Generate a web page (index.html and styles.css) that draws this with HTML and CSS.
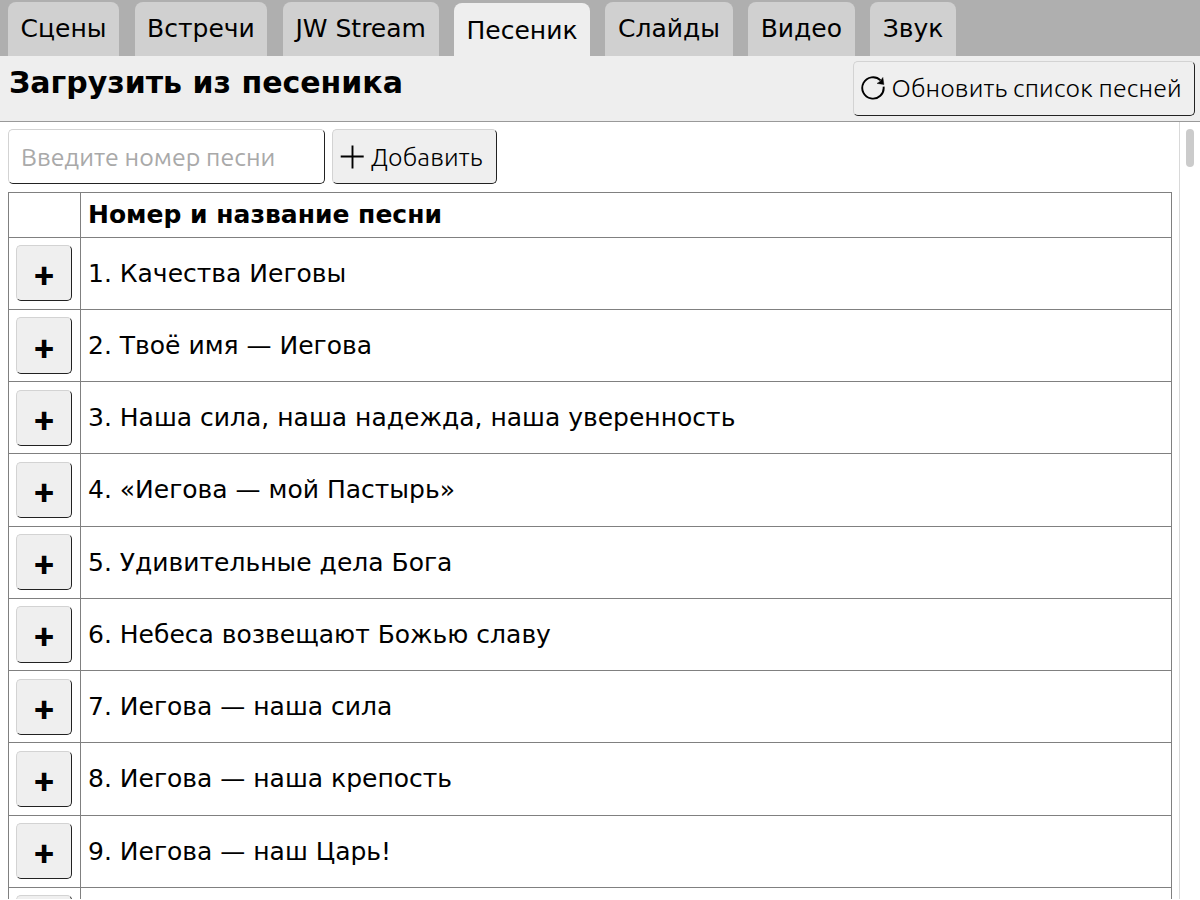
FILE: index.html
```
<!DOCTYPE html>
<html lang="ru">
<head>
<meta charset="utf-8">
<title>Песеник</title>
<link rel="stylesheet" href="styles.css">
</head>
<body>
<nav class="tabs">
<a class="tab">Сцены</a>
<a class="tab">Встречи</a>
<a class="tab">JW Stream</a>
<a class="tab active">Песеник</a>
<a class="tab">Слайды</a>
<a class="tab">Видео</a>
<a class="tab">Звук</a>
</nav>
<header class="head">
<h1 class="title">Загрузить из песеника</h1>
<button class="btn refresh"><svg class="icon" viewBox="0 0 24 24"><path d="M22.6 10.6A10.7 10.7 0 1 1 19.6 4.4" fill="none" stroke="#000" stroke-width="1.9"/><path d="M21.9 1.4l1 7.2-6.9-1.2 3-2z" stroke="#000" stroke-width=".4"/></svg><span>Обновить список песней</span></button>
</header>
<main class="main">
<div class="form">
<input class="field" placeholder="Введите номер песни">
<button class="btn insert"><svg class="icon" viewBox="0 0 24 24"><path d="M12.5 .5v23M.7 11.5h23" fill="none" stroke="#000" stroke-width="1.9"/></svg><span>Добавить</span></button>
</div>
<div class="table">
<div class="row th"><div class="c1"></div><div class="c2">Номер и название песни</div></div>
<div class="row"><div class="c1"><button class="add">+</button></div><div class="c2">1. Качества Иеговы</div></div>
<div class="row"><div class="c1"><button class="add">+</button></div><div class="c2">2. Твоё имя — Иегова</div></div>
<div class="row"><div class="c1"><button class="add">+</button></div><div class="c2">3. Наша сила, наша надежда, наша уверенность</div></div>
<div class="row"><div class="c1"><button class="add">+</button></div><div class="c2">4. «Иегова — мой Пастырь»</div></div>
<div class="row"><div class="c1"><button class="add">+</button></div><div class="c2">5. Удивительные дела Бога</div></div>
<div class="row"><div class="c1"><button class="add">+</button></div><div class="c2">6. Небеса возвещают Божью славу</div></div>
<div class="row"><div class="c1"><button class="add">+</button></div><div class="c2">7. Иегова — наша сила</div></div>
<div class="row"><div class="c1"><button class="add">+</button></div><div class="c2">8. Иегова — наша крепость</div></div>
<div class="row"><div class="c1"><button class="add">+</button></div><div class="c2">9. Иегова — наш Царь!</div></div>
<div class="row"><div class="c1"><button class="add"></button></div><div class="c2"></div></div>
</div>
<div class="track"><div class="thumb"></div></div>
</main>
</body>
</html>
```
FILE: styles.css
```
* { box-sizing: border-box; }
body { margin: 0; height: 899px; overflow: hidden; display: flex; flex-direction: column; background: #fff; color: #000; font: 25px/30px "DejaVu Sans", sans-serif; }
.tabs { display: flex; align-items: flex-end; gap: 15.4px; height: 56px; flex: none; padding: 0 8px; background: #afafaf; }
.tab { height: 54px; padding: 12px 12.6px 0; border-radius: 8px 8px 0 0; background: #d0d0d0; white-space: nowrap; }
.tab.active { height: 53px; padding-top: 13px; background: #eee; }
.head { height: 66px; flex: none; display: flex; justify-content: space-between; padding: 5px 5px 0 9px; background: #eee; border-bottom: 1px solid #999; }
.title { margin: 4px 0 0; font-size: 30px; line-height: 36px; }
.btn { height: 55px; display: flex; align-items: center; gap: 7px; padding: 0 0 0 7px; border: 1px solid; border-color: #d3d3d3 #222 #222 #d3d3d3; border-radius: 5px; background: #efefef; color: #000; font: 300 25px/30px "Ubuntu", "Noto Sans", sans-serif; letter-spacing: .13px; white-space: nowrap; }
.refresh { width: 342px; gap: 6.5px; padding-bottom: 1px; }
.insert { width: 165px; }
.icon { width: 24px; height: 24px; flex: none; }
.main { position: relative; flex: 1; min-height: 0; overflow: hidden; padding: 7px 28px 0 8px; }
.form { display: flex; gap: 7px; height: 63px; }
.field { width: 317px; height: 55px; padding: 0 12px; border: 1px solid; border-color: #d3d3d3 #222 #222 #d3d3d3; border-radius: 5px; background: #fff; font: 25px "Ubuntu", "Noto Sans", sans-serif; outline: 0; }
.field::placeholder { color: #a9a9a9; }
.table { width: 1164px; border: 1px solid #808080; border-bottom: 0; }
.row { display: flex; height: 72.22px; border-bottom: 1px solid #808080; }
.row.th { height: 44.8px; font-weight: bold; }
.c1 { width: 72px; flex: none; padding: 7.45px 7px 0; border-right: 1px solid #808080; }
.c2 { flex: 1; padding-left: 7px; line-height: 71px; white-space: nowrap; }
.th .c2 { line-height: 43px; }
.add { display: block; width: 56px; height: 56.2px; padding: 0; border: 1px solid; border-color: #d3d3d3 #222 #222 #d3d3d3; border-radius: 5px; background: #efefef; color: #000; font: bold 37.5px/44px "Ubuntu", "Noto Sans", sans-serif; }
.track { position: absolute; top: 0; right: 0; bottom: 0; width: 21px; border-left: 1px solid #d9d9d9; background: #fff; }
.thumb { width: 8px; height: 38px; margin: 7px 0 0 6px; border-radius: 4px; background: #cbcbcb; }
```
